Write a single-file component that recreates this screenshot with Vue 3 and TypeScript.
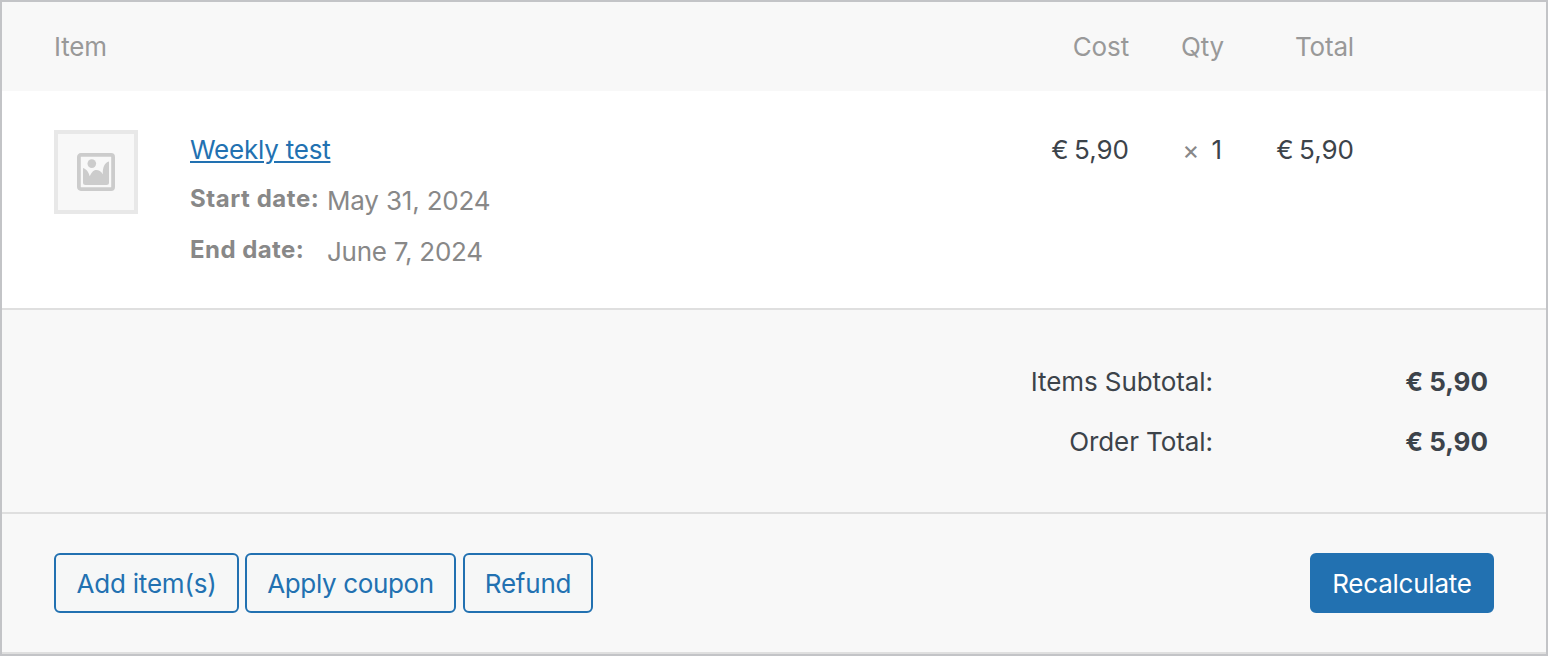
<script setup lang="ts">
interface MetaEntry {
  label: string
  value: string
  name: string
}

interface TotalRow {
  label: string
  amount: string
}

const meta: MetaEntry[] = [
  { label: 'Start date:', value: 'May 31, 2024', name: 'start' },
  { label: 'End date:', value: 'June 7, 2024', name: 'end' },
]

const totals: TotalRow[] = [
  { label: 'Items Subtotal:', amount: '€ 5,90' },
  { label: 'Order Total:', amount: '€ 5,90' },
]
</script>

<template>
  <div class="order">
    <div class="grid head">
      <div class="item-col">Item</div>
      <div class="num">Cost</div>
      <div class="num">Qty</div>
      <div class="num">Total</div>
    </div>

    <div class="grid line">
      <div class="item-col product">
        <div class="thumb">
          <svg width="38" height="38" viewBox="0 0 38 38">
            <rect x="1.9" y="1.9" width="34.2" height="34.2" rx="2" fill="none" stroke="#ccc" stroke-width="3.8" />
            <circle cx="14.8" cy="10.6" r="4.3" fill="#ccc" />
            <path
              d="M6 15C9.500 16 11.800 19.500 12.700 23.300C15 18.500 17 17 19.300 17C21.800 17 24 18.300 25.800 21.200C25.600 14.500 27.500 9.500 32 8.500V29.500Q32 32 29.500 32H8.500Q6 32 6 29.500Z"
              fill="#ccc"
            />
          </svg>
        </div>
        <div class="details">
          <a class="name">Weekly test</a>
          <dl class="meta">
            <template v-for="m in meta" :key="m.name">
              <dt :class="m.name">{{ m.label }}</dt>
              <dd :class="m.name">{{ m.value }}</dd>
            </template>
          </dl>
        </div>
      </div>
      <div class="num price">€ 5,90</div>
      <div class="num qty"><small>×</small><span>1</span></div>
      <div class="num price">€ 5,90</div>
    </div>

    <div class="totals">
      <div v-for="t in totals" :key="t.label" class="total-row">
        <div class="total-label">{{ t.label }}</div>
        <div class="total-amount">{{ t.amount }}</div>
      </div>
    </div>

    <div class="actions">
      <button class="btn add" type="button">Add item(s)</button>
      <button class="btn coupon" type="button">Apply coupon</button>
      <button class="btn refund" type="button">Refund</button>
      <button class="btn primary" type="button">Recalculate</button>
    </div>
  </div>
</template>

<style scoped>
.order {
  box-sizing: border-box;
  width: 1548px;
  height: 656px;
  border: 2px solid #c3c4c7;
  background: #f8f8f8;
  color: #3c434a;
  font-family: Inter, "Liberation Sans", sans-serif;
  font-size: 26px;
  font-weight: 430;
  line-height: 36px;
  white-space: nowrap;
  display: flex;
  flex-direction: column;
  overflow: hidden;
}
.grid {
  box-sizing: border-box;
  display: grid;
  grid-template-columns: 1fr 100px 95px 130px;
  padding: 0 192px 0 52px;
}
.head {
  height: 89px;
  padding-top: 27px;
  color: #999;
  letter-spacing: -0.150px;
}
.line {
  height: 219px;
  padding-top: 39px;
  background: #fff;
  border-bottom: 2px solid #dfdfdf;
}
.num {
  text-align: right;
}
.line .num {
  padding-top: 2px;
}
.price {
  word-spacing: -1.800px;
}
.product {
  display: flex;
  gap: 52px;
}
.thumb {
  box-sizing: border-box;
  width: 84px;
  height: 84px;
  border: 4px solid #e8e8e8;
  background: #f8f8f8;
  display: flex;
  align-items: center;
  justify-content: center;
}
.thumb svg {
  display: block;
}
.details {
  padding-top: 2px;
}
.name {
  display: block;
  width: max-content;
  color: #2271b1;
  letter-spacing: -0.220px;
  text-decoration: underline;
  text-decoration-thickness: 2px;
  text-underline-offset: 2px;
}
.meta {
  margin: 13px 0 0;
  display: grid;
  grid-template-columns: 137px auto;
  row-gap: 15px;
  color: #888;
}
dt {
  font-weight: 700;
  font-size: 24px;
  letter-spacing: 0.560px;
  height: 36px;
  line-height: 36px;
}
dt.end {
  letter-spacing: 0.450px;
}
dd {
  margin: 0;
  padding-top: 2px;
  height: 34px;
  letter-spacing: -0.180px;
}
dd.end {
  letter-spacing: -0.250px;
}
.qty small {
  color: #888;
  font-size: 26px;
  line-height: 20px;
  margin-right: 12px;
}
.qty span {
  margin-right: 2px;
}
.totals {
  box-sizing: border-box;
  height: 204px;
  padding: 54px 58px 0 0;
  border-bottom: 2px solid #dfdfdf;
}
.total-row {
  display: flex;
  justify-content: flex-end;
  height: 60px;
}
.total-label {
  letter-spacing: -0.080px;
}
.total-amount {
  width: 275px;
  text-align: right;
  font-weight: 700;
}
.actions {
  box-sizing: border-box;
  height: 140px;
  padding: 39px 52px 0;
  display: flex;
  border-bottom: 2px solid #dfdfdf;
}
.btn {
  box-sizing: border-box;
  height: 60px;
  padding: 2px 0 0;
  border: 2px solid #2271b1;
  border-radius: 6px;
  background: #f6f7f7;
  color: #2271b1;
  font: inherit;
  letter-spacing: -0.220px;
  white-space: nowrap;
}
.add {
  width: 185px;
  margin-right: 6px;
}
.coupon {
  width: 211px;
  margin-right: 7px;
  letter-spacing: -0.350px;
}
.refund {
  width: 130px;
}
.primary {
  width: 184px;
  margin-left: auto;
  background: #2271b1;
  color: #fff;
}
</style>
